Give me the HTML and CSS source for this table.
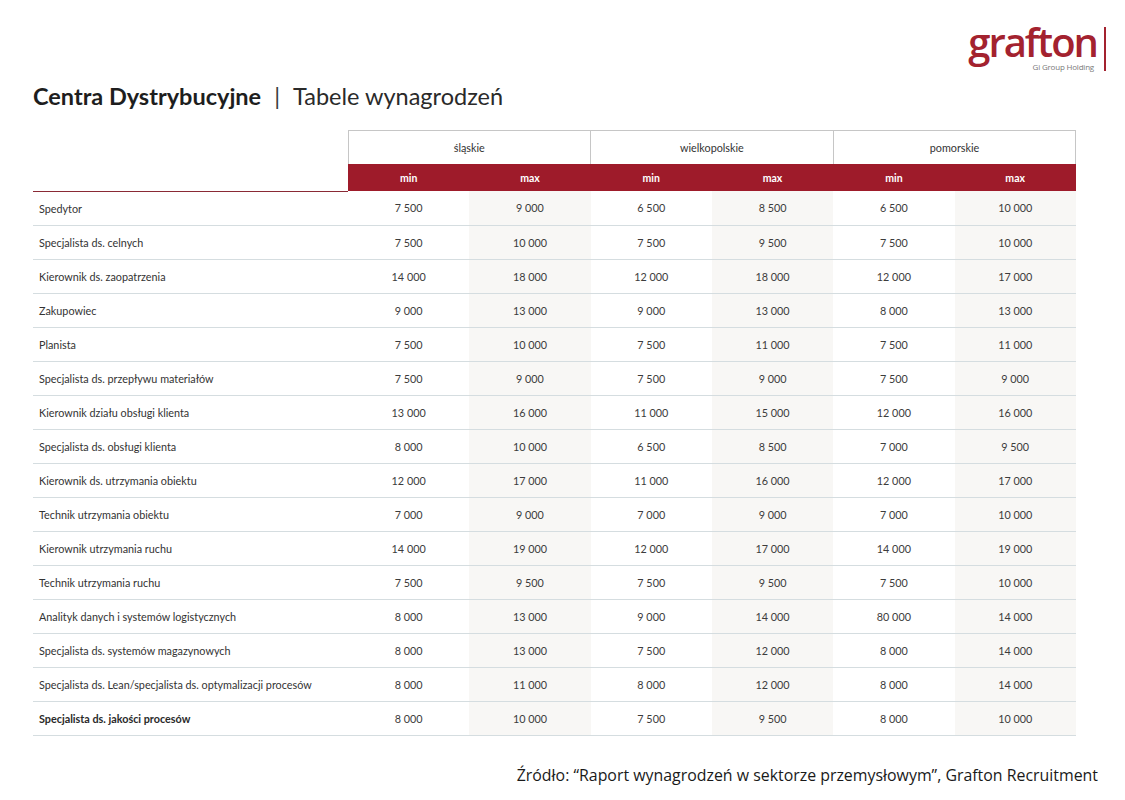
FILE: index.html
```html
<!DOCTYPE html>
<html lang="pl">
<head>
<meta charset="utf-8">
<title>Centra Dystrybucyjne | Tabele wynagrodzeń</title>
<link rel="stylesheet" href="styles.css">
</head>
<body>
<div class="page">
  <header class="top">
    <div class="logo">
      <div class="logo-text">
        <span class="logo-word">grafton</span>
        <span class="logo-sub">Gi Group Holding</span>
      </div>
      <span class="logo-bar"></span>
    </div>
  </header>
  <h1 class="title"><span class="title-main">Centra Dystrybucyjne</span><span class="title-sep">|</span><span class="title-sub">Tabele wynagrodzeń</span></h1>
  <table class="salary">
    <colgroup>
      <col class="c-label"><col class="c-num"><col class="c-num"><col class="c-num"><col class="c-num"><col class="c-num"><col class="c-num">
    </colgroup>
    <thead>
      <tr class="regions">
        <th class="blank" rowspan="2"></th>
        <th colspan="2">śląskie</th>
        <th colspan="2">wielkopolskie</th>
        <th colspan="2">pomorskie</th>
      </tr>
      <tr class="minmax">
        <th>min</th><th>max</th><th>min</th><th>max</th><th>min</th><th>max</th>
      </tr>
    </thead>
    <tbody>
      <tr><td>Spedytor</td><td>7 500</td><td>9 000</td><td>6 500</td><td>8 500</td><td>6 500</td><td>10 000</td></tr>
      <tr><td>Specjalista ds. celnych</td><td>7 500</td><td>10 000</td><td>7 500</td><td>9 500</td><td>7 500</td><td>10 000</td></tr>
      <tr><td>Kierownik ds. zaopatrzenia</td><td>14 000</td><td>18 000</td><td>12 000</td><td>18 000</td><td>12 000</td><td>17 000</td></tr>
      <tr><td>Zakupowiec</td><td>9 000</td><td>13 000</td><td>9 000</td><td>13 000</td><td>8 000</td><td>13 000</td></tr>
      <tr><td>Planista</td><td>7 500</td><td>10 000</td><td>7 500</td><td>11 000</td><td>7 500</td><td>11 000</td></tr>
      <tr><td>Specjalista ds. przepływu materiałów</td><td>7 500</td><td>9 000</td><td>7 500</td><td>9 000</td><td>7 500</td><td>9 000</td></tr>
      <tr><td>Kierownik działu obsługi klienta</td><td>13 000</td><td>16 000</td><td>11 000</td><td>15 000</td><td>12 000</td><td>16 000</td></tr>
      <tr><td>Specjalista ds. obsługi klienta</td><td>8 000</td><td>10 000</td><td>6 500</td><td>8 500</td><td>7 000</td><td>9 500</td></tr>
      <tr><td>Kierownik ds. utrzymania obiektu</td><td>12 000</td><td>17 000</td><td>11 000</td><td>16 000</td><td>12 000</td><td>17 000</td></tr>
      <tr><td>Technik utrzymania obiektu</td><td>7 000</td><td>9 000</td><td>7 000</td><td>9 000</td><td>7 000</td><td>10 000</td></tr>
      <tr><td>Kierownik utrzymania ruchu</td><td>14 000</td><td>19 000</td><td>12 000</td><td>17 000</td><td>14 000</td><td>19 000</td></tr>
      <tr><td>Technik utrzymania ruchu</td><td>7 500</td><td>9 500</td><td>7 500</td><td>9 500</td><td>7 500</td><td>10 000</td></tr>
      <tr><td>Analityk danych i systemów logistycznych</td><td>8 000</td><td>13 000</td><td>9 000</td><td>14 000</td><td>80 000</td><td>14 000</td></tr>
      <tr><td>Specjalista ds. systemów magazynowych</td><td>8 000</td><td>13 000</td><td>7 500</td><td>12 000</td><td>8 000</td><td>14 000</td></tr>
      <tr><td>Specjalista ds. Lean/specjalista ds. optymalizacji procesów</td><td>8 000</td><td>11 000</td><td>8 000</td><td>12 000</td><td>8 000</td><td>14 000</td></tr>
      <tr class="last"><td>Specjalista ds. jakości procesów</td><td>8 000</td><td>10 000</td><td>7 500</td><td>9 500</td><td>8 000</td><td>10 000</td></tr>
    </tbody>
  </table>
  <p class="source">Źródło: “Raport wynagrodzeń w sektorze przemysłowym”, Grafton Recruitment</p>
</div>
</body>
</html>
```
FILE: styles.css
```css
html, body {
  margin: 0;
  padding: 0;
  background: #ffffff;
}

.page {
  width: 1125px;
  height: 800px;
  box-sizing: border-box;
  padding: 0 49px 0 33px;
  font-family: Lato, "Noto Sans", sans-serif;
  color: #333;
}

.top {
  display: flex;
  justify-content: flex-end;
  height: 72px;
  padding-top: 25px;
  box-sizing: border-box;
  margin-right: -30px;
}

.logo {
  display: flex;
  align-items: flex-start;
  gap: 7px;
}

.logo-text {
  display: flex;
  flex-direction: column;
  align-items: flex-end;
}

.logo-word {
  font-family: "Open Sans", "Noto Sans", sans-serif;
  font-size: 40px;
  font-weight: 600;
  line-height: 34px;
  letter-spacing: -2px;
  color: #a3222f;
}

.logo-sub {
  font-family: "Open Sans", "Noto Sans", sans-serif;
  font-size: 8px;
  line-height: 10px;
  color: #7a7a7a;
  margin-top: 3px;
  margin-right: 3px;
  letter-spacing: -0.2px;
}

.logo-bar {
  width: 2px;
  height: 44px;
  background: #a3222f;
  margin-top: 2px;
}

.title {
  margin: 11px 0 0 0;
  height: 47px;
  font-size: 23.5px;
  line-height: 26px;
  font-weight: normal;
  color: #1e1e1e;
  display: flex;
  align-items: baseline;
}

.title-main {
  font-weight: 700;
}

.title-sep {
  margin: 0 13px 0 13px;
  font-weight: 400;
  color: #3a3a3a;
}

.title-sub {
  font-weight: 400;
  color: #2a2a2a;
}

.salary {
  width: 1043px;
  border-collapse: collapse;
  table-layout: fixed;
  font-size: 10.8px;
}

.c-label {
  width: 315px;
}

.c-num {
  width: 121.3px;
}

.salary th,
.salary td {
  padding: 0;
  text-align: center;
}

.regions th {
  height: 33px;
  font-weight: normal;
  color: #333;
  border-top: 1px solid #c6c6c6;
  border-left: 1px solid #c6c6c6;
  border-right: 1px solid #c6c6c6;
}

.regions th.blank {
  border: none;
  border-bottom: 1px solid #8a2a35;
}

.minmax th {
  height: 27px;
  background: #9e1b2a;
  color: #ffffff;
  font-weight: 700;
  font-size: 10.5px;
  border-left: none;
}

.salary tbody td {
  height: 33px;
  border-bottom: 1px solid #d5dde0;
  color: #3c3c3c;
}

.salary tbody td:first-child {
  text-align: left;
  padding-left: 6px;
  color: #333;
}

.salary tbody td:nth-child(odd):not(:first-child) {
  background: #f8f7f5;
}

.salary tbody tr.last td:first-child {
  font-weight: 700;
  color: #2a2a2a;
}

.source {
  margin: 28px -22px 0 0;
  text-align: right;
  font-family: "Open Sans", "Noto Sans", sans-serif;
  font-size: 15.9px;
  color: #1a1a1a;
}
```
